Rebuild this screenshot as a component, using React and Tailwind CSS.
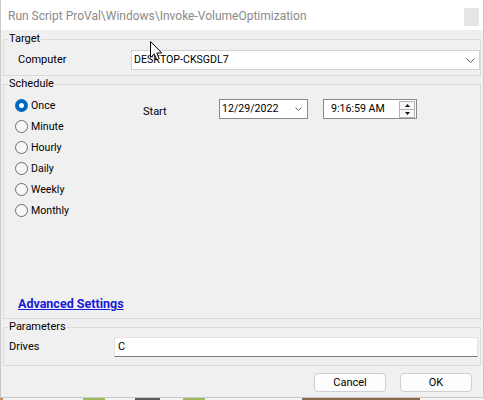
import React from "react";

function Radio({ label, checked }) {
  return (
    <div className="h-[21px] flex items-center">
      {checked ? (
        <div className="w-[13px] h-[13px] rounded-full bg-[#0067c0] flex items-center justify-center">
          <div className="w-[5px] h-[5px] rounded-full bg-white" />
        </div>
      ) : (
        <div className="w-[13px] h-[13px] rounded-full border border-[#6e6e6e] bg-[#f7f7f7]" />
      )}
      <span className="ml-[3px] leading-[14px]">{label}</span>
    </div>
  );
}

function Chevron() {
  return (
    <svg width="9" height="5" viewBox="0 0 9 5">
      <path d="M0.5 0.5 L4.5 4.5 L8.5 0.5" fill="none" stroke="#5a5a5a" strokeWidth="1" />
    </svg>
  );
}

export default function App() {
  return (
    <div className="w-[484px] h-[400px] overflow-hidden bg-[#f2f2f2] relative font-['Roboto','Noto_Sans',sans-serif] text-[10.6px] text-black">
      <div className="h-[398px] w-[484px] flex flex-col bg-[#f0f0f0] border border-t-0 border-[#c9c9c9]">
        {/* title bar */}
        <div className="h-[30px] bg-white flex items-center pl-[7px] pr-[4px] shrink-0">
          <span className="flex-1 text-[12px] text-[#8a8a8a] leading-[16px] pt-[2px]">
            Run Script ProVal\Windows\Invoke-VolumeOptimization
          </span>
          <div className="w-[15px] h-[18px] bg-[#e6e6e6] mt-[4px]" />
        </div>

        {/* Target */}
        <fieldset className="mt-px ml-[2px] mr-[2px] border border-[#dadada]">
          <legend className="ml-[4px] px-px leading-[16px] text-[11px]">Target</legend>
          <div className="flex items-center pt-[3px] pb-[5px]">
            <div className="ml-[14px] w-[113px] leading-[16px] text-[11px]">Computer</div>
            <div className="flex-1 h-[20px] bg-white border border-[#d0d0d0] flex items-center pl-[2px] pr-[4px]">
              <span className="flex-1 leading-[14px]">DESKTOP-CKSGDL7</span>
              <Chevron />
            </div>
          </div>
        </fieldset>

        {/* Schedule */}
        <fieldset className="ml-[2px] mr-[2px] border border-[#dadada]">
          <legend className="ml-[4px] px-px leading-[16px] text-[11px]">Schedule</legend>
          <div className="h-[226px] flex flex-col">
            <div className="flex pt-[3px]">
              <div className="w-[139px] pl-[11px] flex flex-col">
                <Radio label="Once" checked />
                <Radio label="Minute" />
                <Radio label="Hourly" />
                <Radio label="Daily" />
                <Radio label="Weekly" />
                <Radio label="Monthly" />
              </div>
              <div className="flex items-start mt-[4px]">
                <div className="w-[76px] pt-[6px] leading-[14px] text-[11px]">Start</div>
                <div className="w-[89px] h-[20px] bg-white border border-[#8a8a8a] flex items-center pl-[2px] pr-[5px]">
                  <span className="flex-1 leading-[14px] text-[10.6px]">12/29/2022</span>
                  <svg width="7" height="4" viewBox="0 0 7 4">
                    <path d="M0.5 0.5 L3.5 3.5 L6.5 0.5" fill="none" stroke="#6a6a6a" strokeWidth="1" />
                  </svg>
                </div>
                <div className="ml-[15px] w-[94px] h-[20px] bg-white border border-[#8a8a8a] flex items-center pl-[7px] pr-px">
                  <span className="flex-1 leading-[14px] text-[10.6px]">9:16:59 AM</span>
                  <div className="w-[16px] h-[17px] flex flex-col">
                    <div className="flex-1 border border-[#b5b5b5] bg-[#f7f7f7] flex items-center justify-center">
                      <svg width="5" height="3" viewBox="0 0 5 3"><path d="M0 3 L2.5 0 L5 3 Z" fill="#111" /></svg>
                    </div>
                    <div className="flex-1 border border-t-0 border-[#b5b5b5] bg-[#f7f7f7] flex items-center justify-center">
                      <svg width="5" height="3" viewBox="0 0 5 3"><path d="M0 0 L2.5 3 L5 0 Z" fill="#111" /></svg>
                    </div>
                  </div>
                </div>
              </div>
            </div>
            <div className="flex-1" />
            <div className="pl-[14px] pb-[5px] leading-[16px]">
              <span className="font-bold underline text-[#1a1ad6] text-[12.5px]">Advanced Settings</span>
            </div>
          </div>
        </fieldset>

        {/* Parameters */}
        <fieldset className="ml-[2px] mr-[2px] border border-[#dadada]">
          <legend className="ml-[4px] px-px leading-[16px] text-[11px]">Parameters</legend>
          <div className="flex items-center pt-[2px] pb-[8px]">
            <div className="ml-[5px] w-[105px] leading-[16px] text-[11px]">Drives</div>
            <div className="flex-1 mr-[2px] h-[20px] bg-white border border-[#e2e2e2] border-b-[#7a7a7a] flex items-center pl-[3px]">
              <span className="leading-[14px] text-[11px]">C</span>
            </div>
          </div>
        </fieldset>

        {/* buttons */}
        <div className="flex justify-end gap-[14px] pt-[7px] pr-[11px]">
          <button className="w-[72px] h-[19px] rounded-[4px] bg-[#fdfdfd] border border-[#cfcfcf] leading-[14px] text-[11px]">
            Cancel
          </button>
          <button className="w-[72px] h-[19px] rounded-[4px] bg-[#fdfdfd] border border-[#cfcfcf] leading-[14px] text-[11px]">
            OK
          </button>
        </div>
      </div>

      {/* desktop strip */}
      <div className="h-[2px] flex">
        <div className="w-[3px] bg-[#c98a55]" />
        <div className="w-[80px] bg-[#f3f3f3]" />
        <div className="w-[22px] bg-[#9bb85a]" />
        <div className="w-[30px] bg-[#f3f3f3]" />
        <div className="w-[25px] bg-[#5a5a5a]" />
        <div className="w-[23px] bg-[#f3f3f3]" />
        <div className="w-[22px] bg-[#9bb85a]" />
        <div className="w-[97px] bg-[#f3f3f3]" />
        <div className="w-[118px] bg-[#8a6a4a]" />
        <div className="flex-1 bg-[#f3f3f3]" />
      </div>

      {/* mouse cursor */}
      <svg className="absolute left-[150px] top-[41px]" width="13" height="21" viewBox="0 0 13 21">
        <path
          d="M0.5 0.5 L0.5 16.5 L4.3 12.9 L6.8 18.8 L9.2 17.8 L6.8 12 L11.8 12 Z"
          fill="#ffffff"
          stroke="#000000"
          strokeWidth="1"
          strokeLinejoin="round"
        />
      </svg>
    </div>
  );
}
